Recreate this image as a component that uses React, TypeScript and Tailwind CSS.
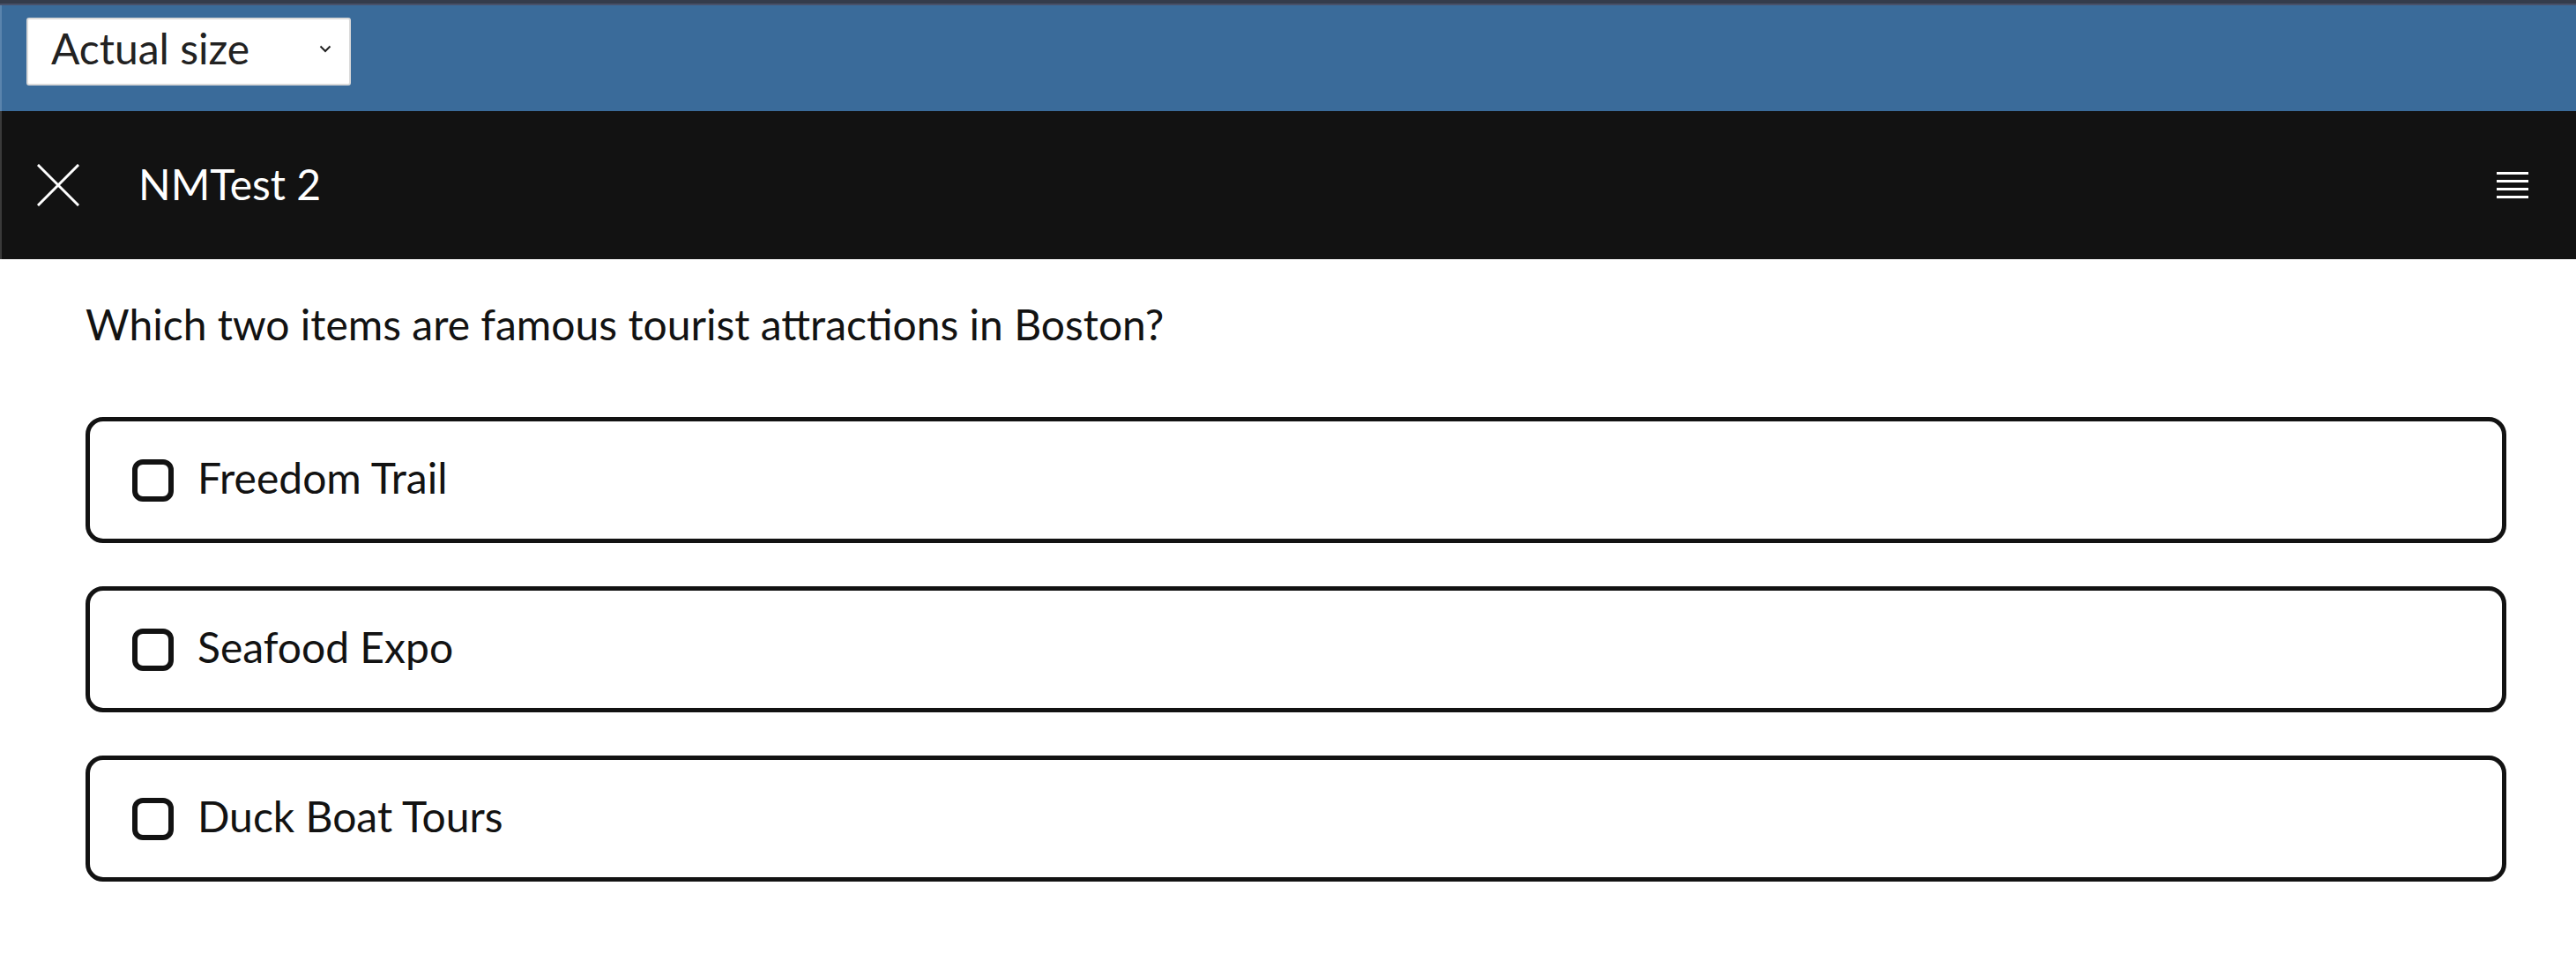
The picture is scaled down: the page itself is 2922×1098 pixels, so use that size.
import React from 'react';

const options = ['Freedom Trail', 'Seafood Expo', 'Duck Boat Tours'];

function CloseIcon() {
  return (
    <svg width="48" height="48" viewBox="0 0 48 48" className="block">
      <path d="M2 2 L46 46 M46 2 L2 46" stroke="#ffffff" strokeWidth="3" strokeLinecap="square" />
    </svg>
  );
}

function MenuIcon() {
  return (
    <div className="flex flex-col gap-[6px] w-[36px]">
      <div className="h-[3px] bg-white" />
      <div className="h-[3px] bg-white" />
      <div className="h-[3px] bg-white" />
      <div className="h-[3px] bg-white" />
    </div>
  );
}

export default function App() {
  return (
    <div className="min-h-screen w-full bg-white text-[#121212] font-['Lato','Open_Sans',sans-serif]">
      <div className="h-[4px] bg-[#343c4c]" />
      <div className="h-[2px] bg-[#48516a]" />

      {/* Zoom selector bar */}
      <div className="h-[120px] bg-[#3a6b9a] border-l-2 border-[#5a84ad] pl-[28px] pt-[14px]">
        <div className="w-[368px] h-[77px] bg-white border-2 border-[#dadada] rounded-[3px] flex items-center justify-between pl-[26px] pr-[20px]">
          <span className="text-[48px] leading-none text-[#222222] mb-[8px]">Actual size</span>
          <svg width="14" height="9" viewBox="0 0 14 9" className="mb-[6px]">
            <path d="M1.5 1.5 L7 7 L12.5 1.5" fill="none" stroke="#222222" strokeWidth="2" />
          </svg>
        </div>
      </div>

      {/* Title bar */}
      <div className="h-[168px] bg-[#121212] border-l-2 border-[#3a3a3a] flex items-center justify-between pl-[40px] pr-[54px]">
        <div className="flex items-center gap-[67px]">
          <CloseIcon />
          <span className="text-[48px] leading-none text-white mb-[3px]">NMTest 2</span>
        </div>
        <MenuIcon />
      </div>

      {/* Question */}
      <div className="pl-[97px] pr-[79px] pt-[38px]">
        <p className="text-[48px] leading-[72px]">Which two items are famous tourist attractions in Boston?</p>
        <div className="mt-[69px] flex flex-col gap-[49px]">
          {options.map(opt => (
            <label
              key={opt}
              className="h-[143px] border-[5px] border-[#121212] rounded-[20px] flex items-center pl-[48px] gap-[27px]"
            >
              <span className="w-[47px] h-[48px] border-[6px] border-[#121212] rounded-[12px] shrink-0" />
              <span className="text-[48px] leading-[72px] mb-[6px]">{opt}</span>
            </label>
          ))}
        </div>
      </div>
    </div>
  );
}
